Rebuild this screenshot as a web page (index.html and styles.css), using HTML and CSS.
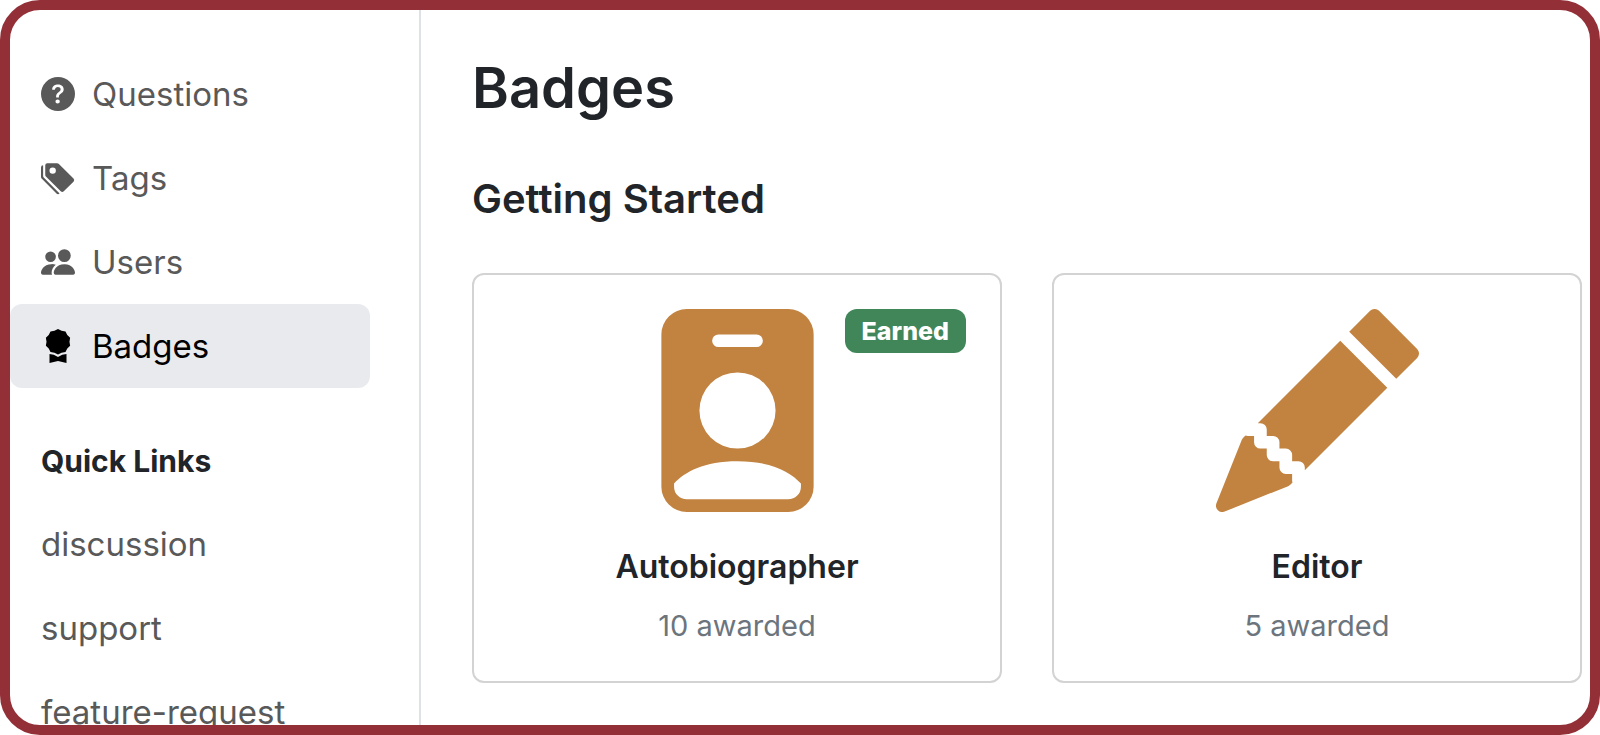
FILE: index.html
```html
<!DOCTYPE html>
<html lang="en">
<head>
<meta charset="utf-8">
<meta name="viewport" content="width=device-width, initial-scale=1">
<title>Badges</title>
<link rel="stylesheet" href="styles.css">
</head>
<body>
<div class="frame">
  <aside class="sidebar">
    <nav class="nav" aria-label="Main">
      <a class="nav-link" href="#questions">
        <svg class="nav-icon" viewBox="0 0 16 16" aria-hidden="true"><path d="M16 8A8 8 0 1 1 0 8a8 8 0 0 1 16 0M5.496 6.033h.825c.138 0 .248-.113.266-.25.09-.656.54-1.134 1.342-1.134.686 0 1.314.343 1.314 1.168 0 .635-.374.927-.965 1.371-.673.489-1.206 1.06-1.168 1.987l.003.217a.25.25 0 0 0 .25.246h.811a.25.25 0 0 0 .25-.25v-.105c0-.718.273-.927 1.01-1.486.609-.463 1.244-.977 1.244-2.056 0-1.511-1.276-2.241-2.673-2.241-1.267 0-2.655.59-2.75 2.286a.237.237 0 0 0 .241.247m2.325 6.443c.61 0 1.029-.394 1.029-.927 0-.552-.42-.94-1.029-.94-.584 0-1.009.388-1.009.94 0 .533.425.927 1.01.927z"/></svg>
        <span>Questions</span>
      </a>
      <a class="nav-link" href="#tags">
        <svg class="nav-icon" viewBox="0 0 16 16" aria-hidden="true"><path d="M2 2a1 1 0 0 1 1-1h4.586a1 1 0 0 1 .707.293l7 7a1 1 0 0 1 0 1.414l-4.586 4.586a1 1 0 0 1-1.414 0l-7-7A1 1 0 0 1 2 6.586zm3.5 4a1.5 1.5 0 1 0 0-3 1.5 1.5 0 0 0 0 3"/><path d="M1.293 7.793A1 1 0 0 1 1 7.086V2a1 1 0 0 0-1 1v4.586a1 1 0 0 0 .293.707l7 7a1 1 0 0 0 1.414 0l.043-.043z"/></svg>
        <span>Tags</span>
      </a>
      <a class="nav-link" href="#users">
        <svg class="nav-icon" viewBox="0 0 16 16" aria-hidden="true"><path d="M7 14s-1 0-1-1 1-4 5-4 5 3 5 4-1 1-1 1zm4-6a3 3 0 1 0 0-6 3 3 0 0 0 0 6m-5.784 6A2.24 2.24 0 0 1 5 13c0-1.355.68-2.75 1.936-3.72A6.3 6.3 0 0 0 5 9c-4 0-5 3-5 4s1 1 1 1zM4.5 8a2.5 2.5 0 1 0 0-5 2.5 2.5 0 0 0 0 5"/></svg>
        <span>Users</span>
      </a>
      <a class="nav-link active" href="#badges" aria-current="page">
        <svg class="nav-icon" viewBox="0 0 16 16" aria-hidden="true"><path d="m8 0 1.669.864 1.858.282.842 1.68 1.337 1.32L13.4 6l.306 1.854-1.337 1.32-.842 1.68-1.858.282L8 12l-1.669-.864-1.858-.282-.842-1.68-1.337-1.32L2.6 6l-.306-1.854 1.337-1.32.842-1.68L6.331.864z"/><path d="M4 11.794V16l4-1 4 1v-4.206l-2.018.306L8 13.126 6.018 12.1z"/></svg>
        <span>Badges</span>
      </a>
    </nav>
    <h2 class="sidebar-title">Quick Links</h2>
    <nav class="nav" aria-label="Quick Links">
      <a class="nav-link" href="#discussion">discussion</a>
      <a class="nav-link" href="#support">support</a>
      <a class="nav-link" href="#feature-request">feature-request</a>
    </nav>
  </aside>
  <main class="main">
    <h1 class="page-title">Badges</h1>
    <h2 class="section-title">Getting Started</h2>
    <div class="cards">
      <article class="card">
        <span class="earned">Earned</span>
        <svg class="card-icon" viewBox="0 0 16 16" aria-hidden="true"><path d="M2 2a2 2 0 0 1 2-2h8a2 2 0 0 1 2 2v12a2 2 0 0 1-2 2H4a2 2 0 0 1-2-2zm4.5 0a.5.5 0 0 0 0 1h3a.5.5 0 0 0 0-1zM8 11a3 3 0 1 0 0-6 3 3 0 0 0 0 6m5 2.755C12.146 12.825 10.623 12 8 12s-4.146.826-5 1.755V14a1 1 0 0 0 1 1h8a1 1 0 0 0 1-1z"/></svg>
        <h3 class="card-title">Autobiographer</h3>
        <p class="card-count">10 awarded</p>
      </article>
      <article class="card">
        <svg class="card-icon" viewBox="0 0 16 16" aria-hidden="true"><path d="M12.854.146a.5.5 0 0 0-.707 0L10.5 1.793 14.207 5.5l1.647-1.646a.5.5 0 0 0 0-.708zm.646 6.061L9.793 2.5 3.293 9H3.5a.5.5 0 0 1 .5.5v.5h.5a.5.5 0 0 1 .5.5v.5h.5a.5.5 0 0 1 .5.5v.5h.5a.5.5 0 0 1 .5.5v.207zm-7.468 7.468A.5.5 0 0 1 6 13.5V13h-.5a.5.5 0 0 1-.5-.5V12h-.5a.5.5 0 0 1-.5-.5V11h-.5a.5.5 0 0 1-.5-.5V10h-.5a.5.5 0 0 1-.175-.032l-.179.178a.5.5 0 0 0-.11.168l-2 5a.5.5 0 0 0 .65.65l5-2a.5.5 0 0 0 .168-.11z"/></svg>
        <h3 class="card-title">Editor</h3>
        <p class="card-count">5 awarded</p>
      </article>
    </div>
  </main>
</div>
</body>
</html>
```
FILE: styles.css
```css
* {
  box-sizing: border-box;
}

body {
  margin: 0;
  background: #fff;
  color: #212529;
  font-family: Inter, "Liberation Sans", sans-serif;
}

h1, h2, h3, p {
  margin: 0;
}

.frame {
  display: flex;
  height: 100vh;
  overflow: hidden;
  border: 10px solid #922f37;
  border-radius: 40px;
}

.sidebar {
  flex: 0 0 411px;
  padding: 42px 49px 0 0;
  border-right: 2px solid #dee2e6;
}

.nav {
  display: flex;
  flex-direction: column;
}

.nav-link {
  display: flex;
  align-items: center;
  gap: 17px;
  padding: 16px 31px;
  border-radius: 12px;
  color: #595959;
  font-size: 33px;
  line-height: 52px;
  text-decoration: none;
}

.nav-link.active {
  background: #e9eaee;
  color: #000;
}

.nav-icon {
  width: 34px;
  height: 34px;
  fill: currentColor;
}

.sidebar-title {
  padding: 52px 31px 20px;
  font-size: 30px;
  font-weight: 700;
  line-height: 42px;
}

.main {
  flex: 1;
  min-width: 0;
  padding: 42px 8px 42px 51px;
}

.page-title {
  font-size: 56px;
  font-weight: 600;
  line-height: 72px;
}

.section-title {
  margin: 49px 0 48px;
  font-size: 40px;
  font-weight: 600;
  line-height: 52px;
}

.cards {
  display: grid;
  grid-template-columns: 1fr 1fr;
  gap: 50px;
}

.card {
  position: relative;
  display: flex;
  flex-direction: column;
  align-items: center;
  padding: 34px;
  border: 2px solid #d3d3d3;
  border-radius: 12px;
}

.card-icon {
  width: 203px;
  height: 203px;
  fill: #c28341;
}

.card-title {
  margin-top: 34px;
  font-size: 32px;
  font-weight: 600;
  line-height: 42px;
}

.card-count {
  margin-top: 17px;
  color: #6c757d;
  font-size: 29px;
  line-height: 42px;
}

.earned {
  position: absolute;
  top: 34px;
  right: 34px;
  padding: 5px 17px;
  border-radius: 12px;
  background: #418659;
  color: #fff;
  font-size: 25px;
  font-weight: 800;
  line-height: 34px;
}
```
